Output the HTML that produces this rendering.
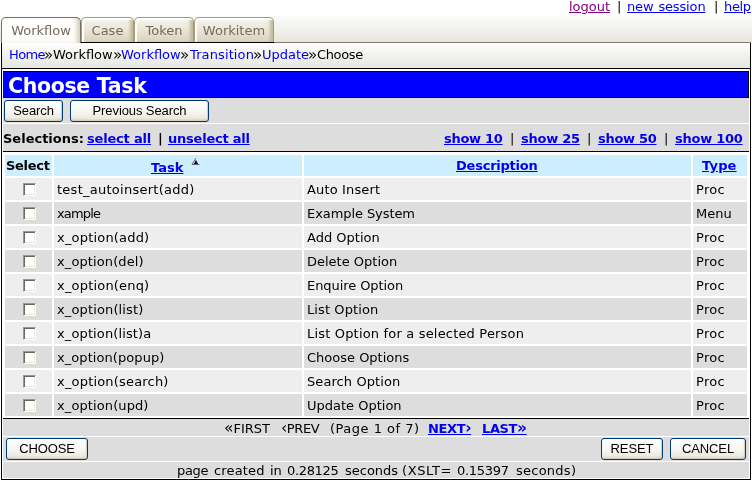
<!DOCTYPE html>
<html><head><meta charset="utf-8"><title>Choose Task</title>
<style>
html,body{margin:0;padding:0;background:#fff;}
body{width:752px;height:481px;position:relative;overflow:hidden;font-family:"DejaVu Sans","Liberation Sans",sans-serif;font-size:13px;color:#000;}
a{color:#0000ee;text-decoration:underline;}
.t{will-change:transform;position:absolute;white-space:pre;line-height:16px;height:16px;}
.b{font-weight:bold;}
#tabbar{position:absolute;left:0;top:16px;width:752px;height:26px;background:linear-gradient(#fbfbf9,#e6e8df);}
.tab{position:absolute;top:17px;height:25px;border:1px solid #a59c7c;border-bottom:none;border-radius:5px 5px 0 0;background:linear-gradient(#f6f5ee 0%,#ebe8d9 45%,#d8d2bc 100%);box-shadow:inset 2px 2px 1px #fff, inset -4px 0 3px -1px #c3ba9b;box-sizing:border-box;}
.tab.active{background:linear-gradient(#ffffff,#fbfbf8);height:26px;box-shadow:inset -5px 0 4px -2px #d3cebd;border-color:#7d7162;}
.tab span{will-change:transform;position:absolute;left:0;right:0;top:5px;text-align:center;color:#766a5e;line-height:16px;}
#frame{position:absolute;left:1px;top:42px;width:748px;height:436px;border:1px solid #000;background:#fff;}
.g{position:absolute;left:3px;width:746px;background:#ddd;}
.k{position:absolute;background:#000;height:1px;}
#crumb{position:absolute;left:2px;top:43px;width:748px;height:25px;background:linear-gradient(#ffffff,#f4f4f0 40%,#e6e7e0);}
.cr a{text-decoration:none;}
#title{position:absolute;left:3px;top:71px;width:745px;height:25px;background:#0000ff;border:1px solid #000;border-left:none;}
.btn{will-change:transform;position:absolute;box-sizing:border-box;height:22px;border:1px solid #003c74;border-radius:3px;background:linear-gradient(#ffffff 0%,#f7f7f3 50%,#eceae1 85%,#d9d3c8 100%);box-shadow:inset -1px -1px 1px #d0cbbd;font-family:"Liberation Sans",sans-serif;font-size:13px;line-height:20px;text-align:center;color:#000;letter-spacing:-0.1px;}
.c{position:absolute;}
.cb{position:absolute;width:11px;height:11px;border:1px solid #9d9a8c;border-right-color:#fff;border-bottom-color:#fff;background:#fff;box-shadow:inset 1px 1px 0 #6a685e, inset -1px -1px 0 #ece9d8;box-sizing:content-box;}
</style></head><body>
<div class="t " style="left:569px;top:-1px;letter-spacing:0px;" id="logout"><a href="#" style="color:#800080">logout</a></div>
<div class="t " style="left:616.5px;top:-1px;" id="bar4">|</div>
<div class="t " style="left:627px;top:-1px;letter-spacing:-0.15px;word-spacing:1px;" id="newsession"><a href="#">new session</a></div>
<div class="t " style="left:713.5px;top:-1px;" id="bar5">|</div>
<div class="t " style="left:724px;top:-1px;letter-spacing:-0.333px;" id="help"><a href="#">help</a></div>
<div id="tabbar"></div>
<div id="frame"></div>
<div class="k" style="left:1px;top:42px;width:750px;background:#85796a"></div>
<div class="k" style="left:81px;top:42px;width:193px;"></div>
<div class="tab active" style="left:1px;width:80px;"><span style="letter-spacing:0px">Workflow</span></div>
<div class="tab " style="left:81px;width:53px;"><span style="letter-spacing:0px">Case</span></div>
<div class="tab " style="left:134px;width:60px;"><span style="letter-spacing:0px">Token</span></div>
<div class="tab " style="left:194px;width:80px;"><span style="letter-spacing:0px">Workitem</span></div>
<div id="crumb"></div>
<div class="t cr" style="left:9px;top:47px;letter-spacing:-0.6px;" id="cr0"><a href="#">Home</a></div>
<div class="t cr" style="left:53px;top:47px;letter-spacing:0px;" id="cr1">Workflow</div>
<div class="t cr" style="left:121px;top:47px;letter-spacing:0px;" id="cr2"><a href="#">Workflow</a></div>
<div class="t cr" style="left:190px;top:47px;letter-spacing:0.111px;" id="cr3"><a href="#">Transition</a></div>
<div class="t cr" style="left:262px;top:47px;letter-spacing:0px;" id="cr4"><a href="#">Update</a></div>
<div class="t cr" style="left:317px;top:47px;letter-spacing:-0.35px;" id="cr5">Choose</div>
<div class="t cr" style="left:43.5px;top:47px;font-size:15px;" id="q0">»</div>
<div class="t cr" style="left:113px;top:47px;font-size:15px;" id="q1">»</div>
<div class="t cr" style="left:179.5px;top:47px;font-size:15px;" id="q2">»</div>
<div class="t cr" style="left:253px;top:47px;font-size:15px;" id="q3">»</div>
<div class="t cr" style="left:308px;top:47px;font-size:15px;" id="q4">»</div>
<div class="k" style="left:2px;top:68px;width:748px;"></div>
<div id="title"></div>
<div class="t b" style="left:8px;top:75px;letter-spacing:-0.33px;color:#fff;font-size:20.5px;line-height:22px;height:22px;" id="titlet">Choose Task</div>
<div class="g" style="top:98px;height:25px"></div>
<div class="g" style="top:124px;height:27px"></div>
<div class="k" style="left:3px;top:151px;width:746px;"></div>
<div class="k" style="left:3px;top:418px;width:746px;"></div>
<div class="g" style="top:419px;height:17px"></div>
<div class="g" style="top:437px;height:24px"></div>
<div class="g" style="top:462px;height:16px"></div>
<div class="btn" style="left:4px;top:100px;width:59px;">Search</div>
<div class="btn" style="left:70px;top:100px;width:139px;">Previous Search</div>
<div class="t b" style="left:3px;top:131px;letter-spacing:0px;" id="sel1">Selections:</div>
<div class="t b" style="left:87px;top:131px;letter-spacing:-0.194px;" id="sel2"><a href="#">select all</a></div>
<div class="t b" style="left:158px;top:131px;" id="bar0">|</div>
<div class="t b" style="left:168px;top:131px;letter-spacing:-0.227px;" id="sel3"><a href="#">unselect all</a></div>
<div class="t b" style="left:444px;top:131px;letter-spacing:-0.292px;" id="show0"><a href="#">show 10</a></div>
<div class="t b" style="left:521px;top:131px;letter-spacing:-0.25px;" id="show1"><a href="#">show 25</a></div>
<div class="t b" style="left:598px;top:131px;letter-spacing:-0.292px;" id="show2"><a href="#">show 50</a></div>
<div class="t b" style="left:675px;top:131px;letter-spacing:-0.25px;" id="show3"><a href="#">show 100</a></div>
<div class="t " style="left:510px;top:131px;" id="bar1">|</div>
<div class="t " style="left:587px;top:131px;" id="bar2">|</div>
<div class="t " style="left:664px;top:131px;" id="bar3">|</div>
<div class="c" style="left:5px;top:155px;width:47px;height:21px;background:#cceeff"></div>
<div class="c" style="left:54px;top:155px;width:248px;height:21px;background:#cceeff"></div>
<div class="c" style="left:304px;top:155px;width:387px;height:21px;background:#cceeff"></div>
<div class="c" style="left:693px;top:155px;width:54px;height:21px;background:#cceeff"></div>
<div class="t b" style="left:6px;top:158px;letter-spacing:-0.28px;" id="Select">Select</div>
<div class="t b" style="left:151px;top:160px;letter-spacing:0px;" id="Task"><a href="#">Task</a></div>
<svg style="position:absolute;left:190px;top:156px" width="12" height="10" viewBox="0 0 12 10"><path d="M6 2 L10 9 L2 9 Z" fill="#ffffff"/><path d="M6 2 L2 8.5 L9.5 8.5" fill="none" stroke="#666" stroke-width="1"/><path d="M6 3.8 L8.3 8 L3.7 8 Z" fill="#000090"/></svg>
<div class="t b" style="left:456px;top:158px;letter-spacing:-0.23px;" id="Description"><a href="#">Description</a></div>
<div class="t b" style="left:702px;top:158px;letter-spacing:0.17px;" id="Type"><a href="#">Type</a></div>
<div class="c" style="left:5px;top:178px;width:47px;height:22px;background:#eeeeee"></div>
<div class="c" style="left:54px;top:178px;width:248px;height:22px;background:#eeeeee"></div>
<div class="c" style="left:304px;top:178px;width:387px;height:22px;background:#eeeeee"></div>
<div class="c" style="left:693px;top:178px;width:54px;height:22px;background:#eeeeee"></div>
<i class="cb" style="left:23px;top:183px"></i>
<div class="t " style="left:57px;top:182px;letter-spacing:0.263px;" id="a0">test_autoinsert(add)</div>
<div class="t " style="left:307px;top:182px;letter-spacing:0.15px;" id="b0">Auto Insert</div>
<div class="t " style="left:696px;top:182px;letter-spacing:0.3px;" id="c0">Proc</div>
<div class="c" style="left:5px;top:202px;width:47px;height:22px;background:#dddddd"></div>
<div class="c" style="left:54px;top:202px;width:248px;height:22px;background:#dddddd"></div>
<div class="c" style="left:304px;top:202px;width:387px;height:22px;background:#dddddd"></div>
<div class="c" style="left:693px;top:202px;width:54px;height:22px;background:#dddddd"></div>
<i class="cb" style="left:23px;top:207px"></i>
<div class="t " style="left:57px;top:206px;letter-spacing:-0.85px;" id="a1">xample</div>
<div class="t " style="left:307px;top:206px;letter-spacing:-0.077px;" id="b1">Example System</div>
<div class="t " style="left:696px;top:206px;letter-spacing:0px;" id="c1">Menu</div>
<div class="c" style="left:5px;top:226px;width:47px;height:22px;background:#eeeeee"></div>
<div class="c" style="left:54px;top:226px;width:248px;height:22px;background:#eeeeee"></div>
<div class="c" style="left:304px;top:226px;width:387px;height:22px;background:#eeeeee"></div>
<div class="c" style="left:693px;top:226px;width:54px;height:22px;background:#eeeeee"></div>
<i class="cb" style="left:23px;top:231px"></i>
<div class="t " style="left:57px;top:230px;letter-spacing:0.188px;" id="a2">x_option(add)</div>
<div class="t " style="left:307px;top:230px;letter-spacing:0px;" id="b2">Add Option</div>
<div class="t " style="left:696px;top:230px;letter-spacing:0.3px;" id="c2">Proc</div>
<div class="c" style="left:5px;top:250px;width:47px;height:22px;background:#dddddd"></div>
<div class="c" style="left:54px;top:250px;width:248px;height:22px;background:#dddddd"></div>
<div class="c" style="left:304px;top:250px;width:387px;height:22px;background:#dddddd"></div>
<div class="c" style="left:693px;top:250px;width:54px;height:22px;background:#dddddd"></div>
<i class="cb" style="left:23px;top:255px"></i>
<div class="t " style="left:57px;top:254px;letter-spacing:0.104px;" id="a3">x_option(del)</div>
<div class="t " style="left:307px;top:254px;letter-spacing:0px;" id="b3">Delete Option</div>
<div class="t " style="left:696px;top:254px;letter-spacing:0.3px;" id="c3">Proc</div>
<div class="c" style="left:5px;top:274px;width:47px;height:22px;background:#eeeeee"></div>
<div class="c" style="left:54px;top:274px;width:248px;height:22px;background:#eeeeee"></div>
<div class="c" style="left:304px;top:274px;width:387px;height:22px;background:#eeeeee"></div>
<div class="c" style="left:693px;top:274px;width:54px;height:22px;background:#eeeeee"></div>
<i class="cb" style="left:23px;top:279px"></i>
<div class="t " style="left:57px;top:278px;letter-spacing:0.188px;" id="a4">x_option(enq)</div>
<div class="t " style="left:307px;top:278px;letter-spacing:-0.077px;" id="b4">Enquire Option</div>
<div class="t " style="left:696px;top:278px;letter-spacing:0.3px;" id="c4">Proc</div>
<div class="c" style="left:5px;top:298px;width:47px;height:22px;background:#dddddd"></div>
<div class="c" style="left:54px;top:298px;width:248px;height:22px;background:#dddddd"></div>
<div class="c" style="left:304px;top:298px;width:387px;height:22px;background:#dddddd"></div>
<div class="c" style="left:693px;top:298px;width:54px;height:22px;background:#dddddd"></div>
<i class="cb" style="left:23px;top:303px"></i>
<div class="t " style="left:57px;top:302px;letter-spacing:0.135px;" id="a5">x_option(list)</div>
<div class="t " style="left:307px;top:302px;letter-spacing:0.1px;" id="b5">List Option</div>
<div class="t " style="left:696px;top:302px;letter-spacing:0.3px;" id="c5">Proc</div>
<div class="c" style="left:5px;top:322px;width:47px;height:22px;background:#eeeeee"></div>
<div class="c" style="left:54px;top:322px;width:248px;height:22px;background:#eeeeee"></div>
<div class="c" style="left:304px;top:322px;width:387px;height:22px;background:#eeeeee"></div>
<div class="c" style="left:693px;top:322px;width:54px;height:22px;background:#eeeeee"></div>
<i class="cb" style="left:23px;top:327px"></i>
<div class="t " style="left:57px;top:326px;letter-spacing:0.125px;" id="a6">x_option(list)a</div>
<div class="t " style="left:307px;top:326px;letter-spacing:0.18px;" id="b6">List Option for a selected Person</div>
<div class="t " style="left:696px;top:326px;letter-spacing:0.3px;" id="c6">Proc</div>
<div class="c" style="left:5px;top:346px;width:47px;height:22px;background:#dddddd"></div>
<div class="c" style="left:54px;top:346px;width:248px;height:22px;background:#dddddd"></div>
<div class="c" style="left:304px;top:346px;width:387px;height:22px;background:#dddddd"></div>
<div class="c" style="left:693px;top:346px;width:54px;height:22px;background:#dddddd"></div>
<i class="cb" style="left:23px;top:351px"></i>
<div class="t " style="left:57px;top:350px;letter-spacing:0.071px;" id="a7">x_option(popup)</div>
<div class="t " style="left:307px;top:350px;letter-spacing:0px;" id="b7">Choose Options</div>
<div class="t " style="left:696px;top:350px;letter-spacing:0.3px;" id="c7">Proc</div>
<div class="c" style="left:5px;top:370px;width:47px;height:22px;background:#eeeeee"></div>
<div class="c" style="left:54px;top:370px;width:248px;height:22px;background:#eeeeee"></div>
<div class="c" style="left:304px;top:370px;width:387px;height:22px;background:#eeeeee"></div>
<div class="c" style="left:693px;top:370px;width:54px;height:22px;background:#eeeeee"></div>
<i class="cb" style="left:23px;top:375px"></i>
<div class="t " style="left:57px;top:374px;letter-spacing:0.183px;" id="a8">x_option(search)</div>
<div class="t " style="left:307px;top:374px;letter-spacing:0.083px;" id="b8">Search Option</div>
<div class="t " style="left:696px;top:374px;letter-spacing:0.3px;" id="c8">Proc</div>
<div class="c" style="left:5px;top:394px;width:47px;height:22px;background:#dddddd"></div>
<div class="c" style="left:54px;top:394px;width:248px;height:22px;background:#dddddd"></div>
<div class="c" style="left:304px;top:394px;width:387px;height:22px;background:#dddddd"></div>
<div class="c" style="left:693px;top:394px;width:54px;height:22px;background:#dddddd"></div>
<i class="cb" style="left:23px;top:399px"></i>
<div class="t " style="left:57px;top:398px;letter-spacing:0.104px;" id="a9">x_option(upd)</div>
<div class="t " style="left:307px;top:398px;letter-spacing:0px;" id="b9">Update Option</div>
<div class="t " style="left:696px;top:398px;letter-spacing:0.3px;" id="c9">Proc</div>
<div class="t " style="left:224px;top:421px;letter-spacing:0px;" id="p0"><span style="font-size:15.5px;line-height:0">«</span>FIRST</div>
<div class="t " style="left:281px;top:421px;letter-spacing:-0.4px;" id="p1"><span style="font-size:15.5px;line-height:0">‹</span>PREV</div>
<div class="t " style="left:330px;top:421px;letter-spacing:0.5px;" id="p2">(Page 1 of 7)</div>
<div class="t b" style="left:428px;top:421px;letter-spacing:-0.375px;" id="p3"><a href="#">NEXT<span style="font-size:15.5px;line-height:0">›</span></a></div>
<div class="t b" style="left:482px;top:421px;letter-spacing:-0.375px;" id="p4"><a href="#">LAST<span style="font-size:15.5px;line-height:0">»</span></a></div>
<div class="btn" style="left:6px;top:438px;width:82px;">CHOOSE</div>
<div class="btn" style="left:601px;top:438px;width:62px;">RESET</div>
<div class="btn" style="left:670px;top:438px;width:76px;">CANCEL</div>
<div class="t " style="left:177px;top:463px;letter-spacing:-0.333px;" id="f0">page</div>
<div class="t " style="left:214px;top:463px;letter-spacing:0.167px;" id="f1">created</div>
<div class="t " style="left:270px;top:463px;letter-spacing:0px;" id="f2">in</div>
<div class="t " style="left:287px;top:463px;letter-spacing:-0.333px;" id="f3">0.28125</div>
<div class="t " style="left:345px;top:463px;letter-spacing:0px;" id="f4">seconds</div>
<div class="t " style="left:402px;top:463px;letter-spacing:0.6px;" id="f5">(XSLT=</div>
<div class="t " style="left:457px;top:463px;letter-spacing:-0.292px;" id="f6">0.15397</div>
<div class="t " style="left:515.5px;top:463px;letter-spacing:0.25px;" id="f7">seconds)</div>
</body></html>
